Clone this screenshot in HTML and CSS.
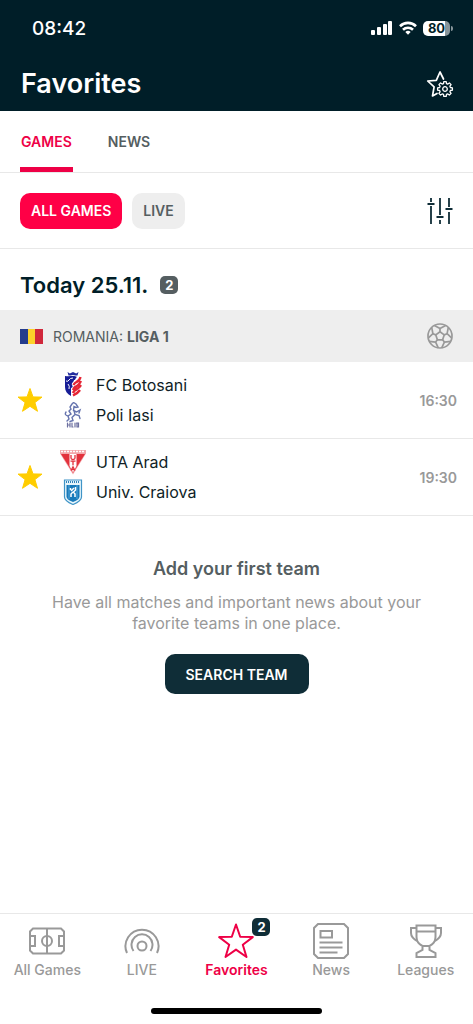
FILE: index.html
```
<!DOCTYPE html>
<html lang="en">
<head>
  <meta charset="UTF-8" />
  <meta name="viewport" content="width=device-width, initial-scale=1.0" />
  <title>Favorites</title>
  <link rel="stylesheet" href="styles.css">
</head>
<body>
  <header class="header">
    <div class="status-bar">
      <span class="clock">08:42</span>
      <div class="status-icons">
        <svg width="22" height="14" viewBox="0 0 22 14" fill="#fff">
          <rect x="0" y="9" width="4" height="5" rx="1"/>
          <rect x="6" y="6" width="4" height="8" rx="1"/>
          <rect x="12" y="3" width="4" height="11" rx="1"/>
          <rect x="17" y="0" width="4" height="14" rx="1"/>
        </svg>
        <svg width="18" height="14" viewBox="0 0 18 14" fill="none" stroke="#fff" stroke-width="2.6">
          <path d="M1 5.2a11.4 11.4 0 0 1 16 0"/>
          <path d="M4 8.7a7.2 7.2 0 0 1 10 0"/>
          <path d="M9 13.8l-2.7-2.9a4 4 0 0 1 5.4 0z" fill="#fff" stroke="none"/>
        </svg>
        <div class="battery"><span>80</span></div>
      </div>
    </div>
    <div class="title-bar">
      <h1>Favorites</h1>
      <button class="icon-button" aria-label="Favorites settings">
        <svg width="28" height="28" viewBox="0 0 28 28" fill="none" stroke="#fff" stroke-linejoin="round" stroke-linecap="round">
          <path d="M17.500 9L14 2l-3.700 8.400L1.700 11l6.400 5.900L6.500 26l4.500-2.600" stroke-width="1.700"/>
          <g transform="translate(19 19)" stroke-width="1.300">
            <path d="M5.400-1.500L7.400-1.200V1.200L5.400 1.500 4.900 2.800 6.100 4.400 4.400 6.100 2.800 4.900 1.500 5.400 1.200 7.400H-1.200L-1.500 5.400-2.800 4.900-4.400 6.100-6.100 4.400-4.900 2.800-5.400 1.500-7.400 1.200V-1.200L-5.400-1.500-4.900-2.800-6.100-4.400-4.400-6.100-2.800-4.900-1.500-5.400-1.200-7.400H1.200L1.500-5.400 2.800-4.900 4.400-6.100 6.100-4.400 4.900-2.800z"/>
            <circle r="2.300"/>
          </g>
        </svg>
      </button>
    </div>
  </header>

  <nav class="tabs">
    <a href="#games" class="active">GAMES</a>
    <a href="#news">NEWS</a>
  </nav>

  <div class="filters">
    <button class="chip active">ALL GAMES</button>
    <button class="chip">LIVE</button>
    <button class="icon-button" aria-label="Sort and filter">
      <svg width="28" height="28" viewBox="0 0 28 28" fill="none" stroke="#0f2d37" stroke-width="1.800">
        <path d="M5 1v4M5 9v18M1.500 7h7M14 1v17M14 23v4M10.500 20h7M23 1v9M23 15v12M19.500 12h7"/>
      </svg>
    </button>
  </div>

  <main>
    <h2 class="date">Today 25.11. <span class="badge">2</span></h2>

    <div class="league">
      <svg class="flag" width="23" height="15" viewBox="0 0 23 15">
        <rect width="8" height="15" fill="#253c8c"/>
        <rect x="8" width="8" height="15" fill="#fcd12a"/>
        <rect x="15" width="8" height="15" fill="#d0273b"/>
      </svg>
      <span>ROMANIA: <b>LIGA 1</b></span>
      <svg class="ball" width="26" height="26" viewBox="0 0 26 26" fill="none" stroke="#999" stroke-width="1.700" stroke-linejoin="round">
        <circle cx="13" cy="13" r="12"/>
        <path d="M13 8.800l4.200 3.100-1.600 4.900h-5.200l-1.600-4.900z"/>
        <path d="M13 8.800V5.500M17.200 11.900l2.900-1.200M15.600 16.800l1.800 2.300M10.400 16.800l-1.800 2.300M8.800 11.900l-2.900-1.200"/>
        <path d="M7.400 2.400L13 5.500l5.600-3.100M21.300 4.400l-1.200 6.300 4.700 4.400M23.800 18.300l-6.400.8-2.700 5.800M11.300 24.900l-2.700-5.800-6.400-.8M1.200 15.100l4.700-4.400-1.200-6.300"/>
      </svg>
    </div>

    <div class="match">
      <button class="star" aria-label="Remove from favorites">
        <svg width="26" height="26" viewBox="0 0 26 26" fill="#ffcd00" stroke="#ffcd00" stroke-linejoin="round"><path d="M13 1.500l3 8.400 9 .2-7.100 5.500 2.600 8.700-7.500-5-7.500 5 2.600-8.700L1 10.100l9-.2z"/></svg>
      </button>
      <div class="teams">
        <div class="team">
          <svg width="26" height="26" viewBox="0 0 26 26">
            <path d="M7.500 0l2.300 1.500L13 0l3.200 1.500L18.500 0l-1 3.500h-9z" fill="#202a9e"/>
            <path d="M5 4q4 1 8-1 4 2 8 1v11c0 6-4 8.500-8 10-4-1.500-8-4-8-10z" fill="#fff"/>
            <path d="M5 4c5 1 9-1 12 1-2 1-1 3-3 3 0 2-3 3-2 5s1 2-1 3v8c-4-2-6-5-6-9z" fill="#171d96"/>
            <path d="M6 9q2 1 3-1 1-2 4-2M8 12q2 2 1 5" stroke="#fff" fill="none"/>
            <path d="M20.500 5q-1 4-4 5-2 1-3 3M21 9q-2 4-4 5-3 1-4 4M21 13q-2 3-4 4-3 1-4 4M20 18q-2 3-7 5.500" stroke="#e52535" stroke-width="2.400" fill="none"/>
          </svg>
          <span>FC Botosani</span>
        </div>
        <div class="team">
          <svg width="26" height="26" viewBox="0 0 26 26" fill="none" stroke="#6674ae" stroke-width="1.400" stroke-linecap="round">
            <path d="M12 2l1.500-1.500L16 2l2 3-2 .5-2-1-.5 4 3 1.500 3.500-2-1 3M12 2l-2 3 1 2-2 2 2 3-3 2 1 3M14 8.500l1 4 4 1 1 3M15 12.500l-3 3 1 3-3 1M8 14q-4-1-2-4M9 17l-2 2"/>
            <path d="M7.500 21v4M7.500 23h2M10 21v4M12 21v4h1M15 21v4M17 21v4h1.500v-4h-2" stroke-width="1.200" stroke="#6c6f9f"/>
          </svg>
          <span>Poli Iasi</span>
        </div>
      </div>
      <time>16:30</time>
    </div>

    <div class="match">
      <button class="star" aria-label="Remove from favorites">
        <svg width="26" height="26" viewBox="0 0 26 26" fill="#ffcd00" stroke="#ffcd00" stroke-linejoin="round"><path d="M13 1.500l3 8.400 9 .2-7.100 5.500 2.600 8.700-7.500-5-7.500 5 2.600-8.700L1 10.100l9-.2z"/></svg>
      </button>
      <div class="teams">
        <div class="team">
          <svg width="26" height="26" viewBox="0 0 26 26">
            <path d="M0 1h26v3.500L13 25.500 0 4.500z" fill="#f3a6aa"/>
            <path d="M1 2.500h24" stroke="#fff" stroke-width="1.500" stroke-dasharray="2 1"/>
            <path d="M1 5h24L13 24z" fill="#e2323d"/>
            <path d="M9.500 5h7v12L13 23.500 9.500 17z" fill="#fff"/>
            <path d="M11 6v3q0 1.500 2 1.500T15 9V6M10.500 12.200h5M13 12.200v4M11 21.500l2-3.700 2 3.700M12 20.500h2" stroke="#e2323d" stroke-width="1.300" fill="none"/>
          </svg>
          <span>UTA Arad</span>
        </div>
        <div class="team">
          <svg width="26" height="26" viewBox="0 0 26 26">
            <path d="M4.500 1h17v17q0 4-8.500 7.500Q4.500 22 4.500 18z" fill="#e7f5fb" stroke="#3f94c7" stroke-width="1.200"/>
            <path d="M6 3h14" stroke="#3182b9" stroke-width="2" stroke-dasharray="1 1"/>
            <path d="M6.500 6h13v11.500q0 3-6.500 5.500-6.500-2.500-6.500-5.500z" fill="#1879b9"/>
            <path d="M9 6v14M17 6v14" stroke="#54a9db"/>
            <path d="M15.500 8v3l-2 2 1.500 2v3M14 9l-3 3M13 13l-2 2v3M10.500 9v2" stroke="#fff" stroke-width="1.500" fill="none"/>
          </svg>
          <span>Univ. Craiova</span>
        </div>
      </div>
      <time>19:30</time>
    </div>

    <section class="empty">
      <h3>Add your first team</h3>
      <p>Have all matches and important news about your favorite teams in one place.</p>
      <button class="search-button">SEARCH TEAM</button>
    </section>
  </main>

  <footer>
    <nav class="bottom-nav">
      <a href="#all">
        <svg width="36" height="36" viewBox="0 0 36 36">
          <path d="M4 5.500h28l3 3v19l-3 3H4l-3-3v-19zM18 5.500v25M1 13h5v10H1M35 13h-5v10h5"/>
          <circle cx="18" cy="18" r="5"/>
        </svg>
        All Games
      </a>
      <a href="#live">
        <svg width="36" height="36" viewBox="0 0 36 36">
          <circle cx="18" cy="23" r="4.500"/>
          <path d="M3 30A16.500 16.500 0 1 1 33 30M9.500 28A10.500 10.500 0 1 1 26.500 28"/>
        </svg>
        LIVE
      </a>
      <a href="#favorites" class="active">
        <svg width="36" height="36" viewBox="0 0 36 36" stroke-linejoin="round"><path d="M18 1.500l4.200 12.300 12.600.3-10 7.600 3.700 12.300L18 26.600 7.500 34l3.700-12.300-10-7.600 12.600-.3z"/></svg>
        Favorites
        <span class="badge">2</span>
      </a>
      <a href="#articles">
        <svg width="36" height="36" viewBox="0 0 36 36"><path d="M5 1h26l4 4v26l-4 4H5l-4-4V5zM7.500 8H19v6.500H7.500zM6.500 19.500h23M6.500 24.500h23M6.500 29.500h18"/></svg>
        News
      </a>
      <a href="#leagues">
        <svg width="36" height="36" viewBox="0 0 36 36"><path d="M8.500 2.500h19V14q0 6-6 9v4l6 3v4h-19v-4l6-3v-4q-6-3-6-9zM8.500 8.500h19M8.500 5H3v5q0 5 7 8.500M27.500 5H33v5q0 5-7 8.500M14.500 23h7"/></svg>
        Leagues
      </a>
    </nav>
    <div class="home-indicator"></div>
  </footer>
</body>
</html>
```
FILE: styles.css
```
* {
  box-sizing: border-box;
}
body {
  font-family: 'Inter', sans-serif;
  background: #fff;
  color: #0f1e26;
  margin: 0;
  min-height: 100vh;
  display: flex;
  flex-direction: column;
}
h1, h2, h3, p {
  margin: 0;
}
button {
  font-family: inherit;
  border: none;
  cursor: pointer;
}
a {
  text-decoration: none;
}
svg {
  display: block;
  flex-shrink: 0;
}
.header {
  background: #001e28;
  color: #fff;
}
.status-bar {
  display: flex;
  align-items: center;
  justify-content: space-between;
  height: 56px;
  padding: 0 20px 0 32px;
}
.clock {
  font-size: 19px;
  font-weight: 500;
}
.status-icons {
  display: flex;
  align-items: center;
  gap: 6px;
}
.battery {
  display: flex;
  align-items: center;
}
.battery span {
  width: 27px;
  line-height: 15px;
  border-radius: 5px;
  background: linear-gradient(to right, #fff 80%, #87959a 80%);
  color: #001e28;
  font-size: 13px;
  font-weight: 700;
  text-align: center;
}
.battery::after {
  content: '';
  width: 2px;
  height: 5px;
  margin-left: 1px;
  border-radius: 0 2px 2px 0;
  background: #87959a;
}
.title-bar {
  display: flex;
  align-items: center;
  justify-content: space-between;
  height: 55px;
  padding: 0 19px 0 21px;
}
.title-bar h1 {
  font-size: 27px;
  font-weight: 600;
}
.icon-button {
  background: none;
  padding: 0;
}
.tabs {
  display: flex;
  gap: 34px;
  height: 62px;
  padding: 0 20px;
  border-bottom: 1px solid #e8e8e8;
}
.tabs a {
  padding: 0 1px;
  color: #555e61;
  font-size: 14px;
  font-weight: 600;
  line-height: 61px;
}
.tabs a.active {
  color: #ee0046;
  border-bottom: 5px solid #ee0046;
  border-radius: 3px 3px 0 0;
}
.filters {
  display: flex;
  align-items: center;
  gap: 10px;
  height: 76px;
  padding: 0 19px 0 20px;
  border-bottom: 1px solid #e8e8e8;
}
.filters .icon-button {
  margin-left: auto;
}
.chip {
  height: 36px;
  padding: 0 11px;
  border-radius: 10px;
  background: #eee;
  color: #555e61;
  font-size: 14px;
  font-weight: 600;
}
.chip.active {
  background: #ff0046;
  color: #fff;
}
.badge {
  width: 18px;
  border-radius: 5px;
  background: #555e61;
  color: #fff;
  font-size: 13px;
  font-weight: 700;
  line-height: 18px;
  text-align: center;
}
.date {
  display: flex;
  align-items: center;
  gap: 12px;
  height: 61px;
  padding: 10px 20px 0;
  color: #001e28;
  font-size: 22px;
  font-weight: 600;
}
.league {
  display: flex;
  align-items: center;
  gap: 10px;
  height: 52px;
  padding: 0 20px;
  background: #eee;
  color: #555e61;
  font-size: 14px;
}
.league .ball {
  margin-left: auto;
}
.match {
  display: flex;
  align-items: center;
  padding: 8px 16px 8px 17px;
  border-bottom: 1px solid #e8e8e8;
}
.star {
  background: none;
  padding: 0;
}
.teams {
  flex: 1;
  padding-left: 17px;
}
.team {
  display: flex;
  align-items: center;
  gap: 10px;
  height: 30px;
  font-size: 16px;
}
.match time {
  color: #999;
  font-size: 14px;
  font-weight: 600;
}
.empty {
  padding: 40px 32px;
  text-align: center;
}
.empty h3 {
  color: #555e61;
  font-size: 18px;
  font-weight: 600;
  line-height: 26px;
}
.empty p {
  margin: 10px 0 20px;
  color: #999;
  font-size: 16px;
  line-height: 21px;
}
.search-button {
  height: 40px;
  padding: 0 21px;
  border-radius: 10px;
  background: #0f2d37;
  color: #fff;
  font-size: 14px;
  font-weight: 600;
}
footer {
  margin-top: auto;
  border-top: 1px solid #e8e8e8;
}
.bottom-nav {
  display: grid;
  grid-template-columns: repeat(5, 1fr);
  padding-top: 9px;
}
.bottom-nav a {
  display: flex;
  flex-direction: column;
  align-items: center;
  gap: 2px;
  position: relative;
  color: #999;
  font-size: 14px;
  font-weight: 500;
  line-height: 18px;
}
.bottom-nav a.active {
  color: #ee0046;
  font-weight: 600;
}
.bottom-nav svg {
  fill: none;
  stroke: currentColor;
  stroke-width: 2;
}
.bottom-nav .badge {
  position: absolute;
  top: -5px;
  left: 50%;
  margin-left: 16px;
  background: #0f2d37;
}
.home-indicator {
  width: 36%;
  height: 6px;
  margin: 29px auto 10px;
  border-radius: 3px;
  background: #000;
}
```
